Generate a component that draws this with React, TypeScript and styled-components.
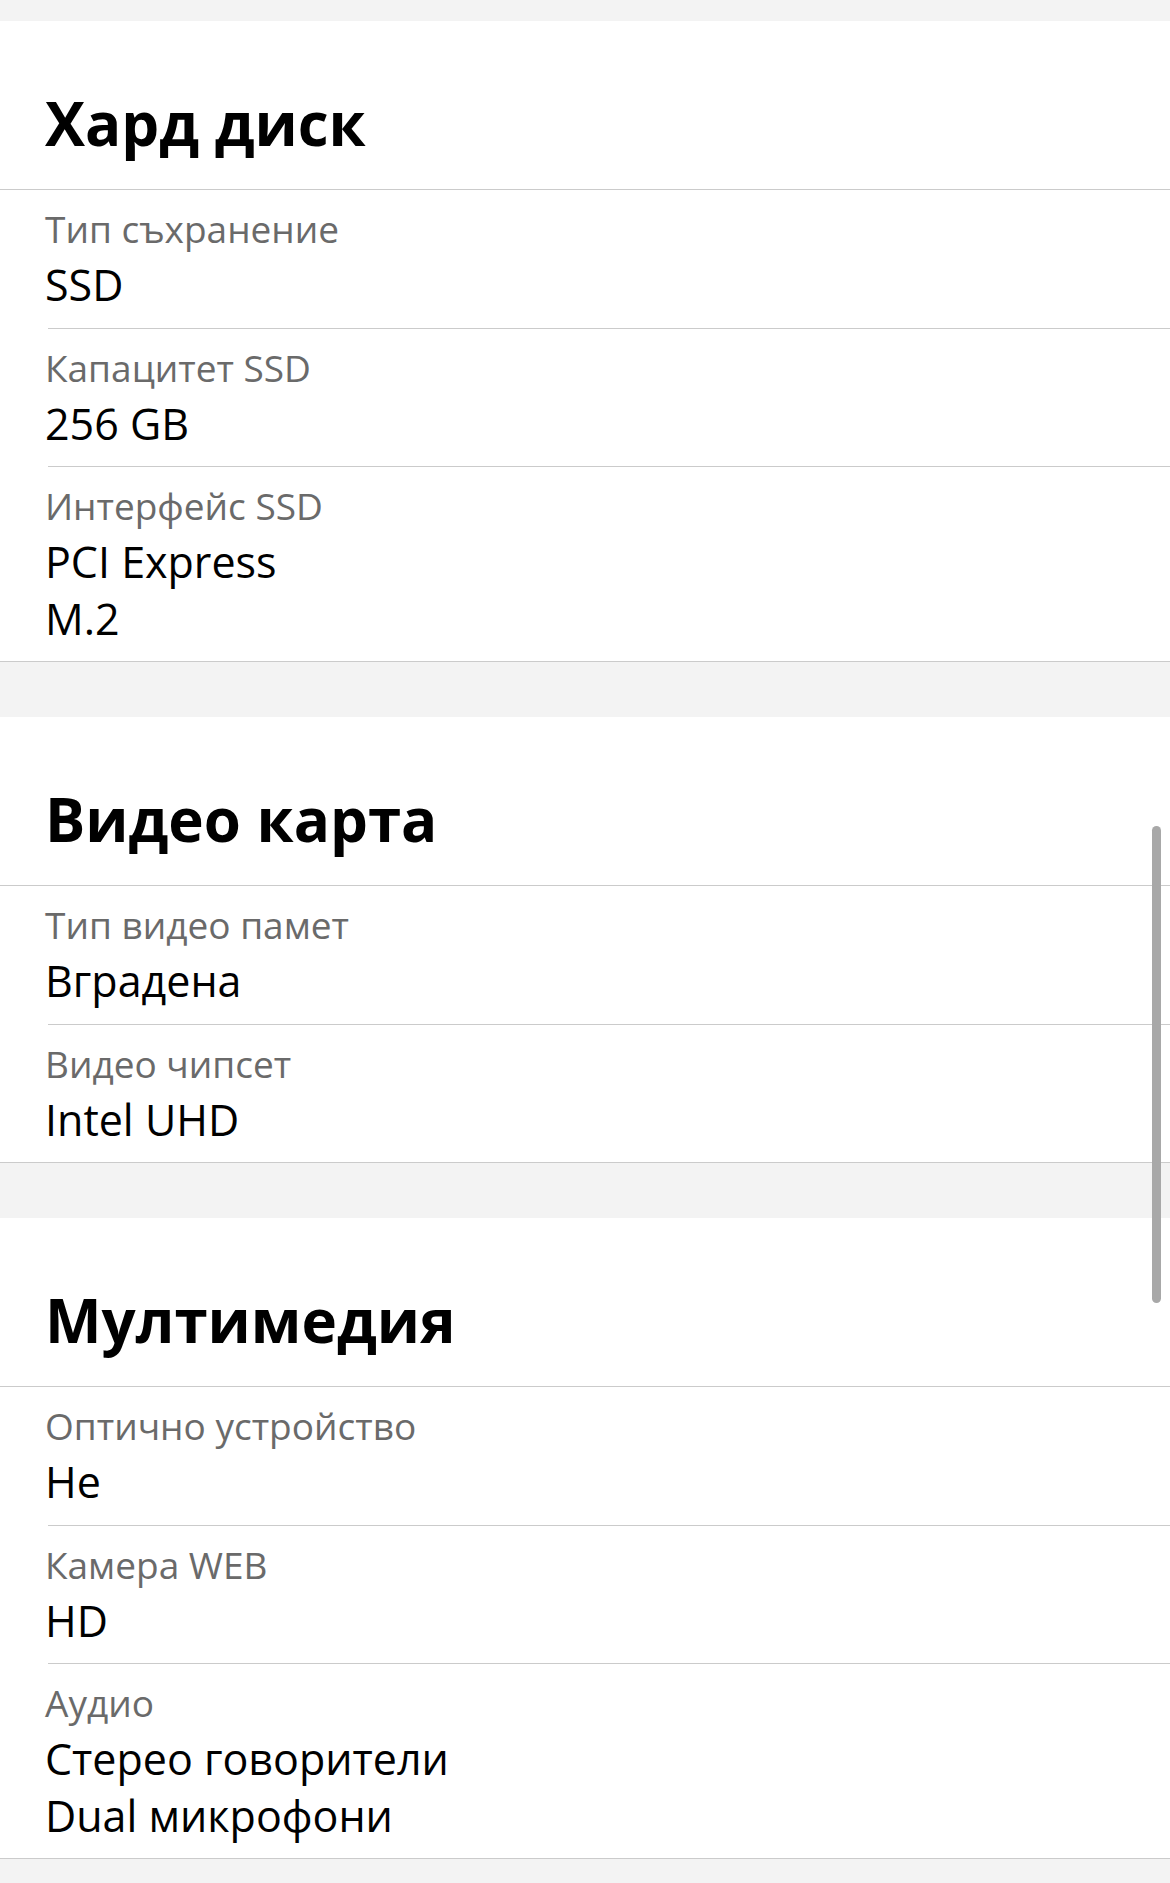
import React from "react";
import styled, { createGlobalStyle } from "styled-components";

const GlobalStyle = createGlobalStyle`
  html, body {
    margin: 0;
    padding: 0;
    background: #f3f3f3;
  }
  body {
    font-family: "Open Sans", "Noto Sans", "DejaVu Sans", sans-serif;
    color: #000;
    -webkit-font-smoothing: antialiased;
  }
`;

const Page = styled.div`
  display: flex;
  flex-direction: column;
  gap: 55px;
  padding: 21px 0 25px;
  background: #f3f3f3;
`;

const Section = styled.section`
  background: #fff;
  border-bottom: 1px solid #cbcbcb;
`;

const Heading = styled.h2`
  margin: 0;
  padding: 61px 45px 25px;
  font-size: 60px;
  line-height: 82px;
  font-weight: 700;
  color: #000;
  border-bottom: 1px solid #cbcbcb;
`;

const Row = styled.div`
  display: flex;
  flex-direction: column;
  padding: 13px 45px 14px;
`;

const Separator = styled.div`
  height: 1px;
  margin-left: 48px;
  background: #cbcbcb;
`;

const Label = styled.div`
  font-size: 37px;
  line-height: 52px;
  font-weight: 400;
  color: #6a6a6a;
`;

const Values = styled.div`
  display: flex;
  flex-direction: column;
  margin-top: 2px;
`;

const Value = styled.div`
  font-size: 43px;
  line-height: 56.5px;
  font-weight: 500;
  color: #000;
`;

const ScrollThumb = styled.div`
  position: absolute;
  left: 1152px;
  top: 826px;
  width: 9px;
  height: 477px;
  border-radius: 5px;
  background: #a8a8a8;
`;

type Spec = { label: string; values: string[] };
type Group = { title: string; specs: Spec[] };

const groups: Group[] = [
  {
    title: "Хард диск",
    specs: [
      { label: "Тип съхранение", values: ["SSD"] },
      { label: "Капацитет SSD", values: ["256 GB"] },
      { label: "Интерфейс SSD", values: ["PCI Express", "M.2"] },
    ],
  },
  {
    title: "Видео карта",
    specs: [
      { label: "Тип видео памет", values: ["Вградена"] },
      { label: "Видео чипсет", values: ["Intel UHD"] },
    ],
  },
  {
    title: "Мултимедия",
    specs: [
      { label: "Оптично устройство", values: ["Не"] },
      { label: "Камера WEB", values: ["HD"] },
      { label: "Аудио", values: ["Стерео говорители", "Dual микрофони"] },
    ],
  },
];

export default function App() {
  return (
    <>
      <GlobalStyle />
      <Page>
        {groups.map((g) => (
          <Section key={g.title}>
            <Heading>{g.title}</Heading>
            {g.specs.map((s, i) => (
              <React.Fragment key={s.label}>
                {i > 0 && <Separator />}
                <Row>
                  <Label>{s.label}</Label>
                  <Values>
                    {s.values.map((v) => (
                      <Value key={v}>{v}</Value>
                    ))}
                  </Values>
                </Row>
              </React.Fragment>
            ))}
          </Section>
        ))}
      </Page>
      <ScrollThumb />
    </>
  );
}
